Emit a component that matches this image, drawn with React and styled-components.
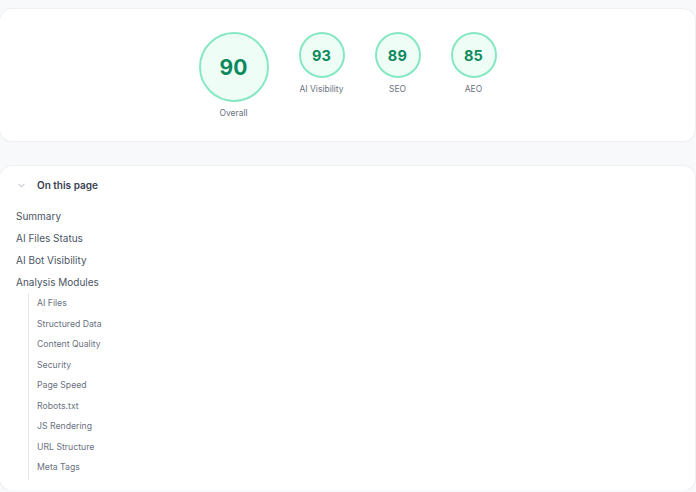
import React from 'react'
import styled, { createGlobalStyle } from 'styled-components'

const GlobalStyle = createGlobalStyle`
  html, body {
    margin: 0;
    padding: 0;
    background: #f8f9fb;
  }
  body {
    font-family: Inter, "Noto Sans", "Liberation Sans", sans-serif;
    color: #374151;
  }
  * { box-sizing: border-box; }
`

const scores = [
  { value: 90, label: 'Overall', big: true },
  { value: 93, label: 'AI Visibility' },
  { value: 89, label: 'SEO' },
  { value: 85, label: 'AEO' },
]

const topLinks = ['Summary', 'AI Files Status', 'AI Bot Visibility', 'Analysis Modules']

const modules = [
  'AI Files',
  'Structured Data',
  'Content Quality',
  'Security',
  'Page Speed',
  'Robots.txt',
  'JS Rendering',
  'URL Structure',
  'Meta Tags',
]

function App() {
  return (
    <Page>
      <GlobalStyle />
      <ScoreCard>
        <ScoreRow>
          {scores.map((s) => (
            <ScoreItem key={s.label}>
              <Circle $big={s.big}>{s.value}</Circle>
              <ScoreLabel>{s.label}</ScoreLabel>
            </ScoreItem>
          ))}
        </ScoreRow>
      </ScoreCard>

      <TocCard>
        <TocHeader>
          <svg width="11" height="11" viewBox="0 0 24 24" fill="none" stroke="#9ca3af" strokeWidth="1.8" strokeLinecap="round" strokeLinejoin="round">
            <path d="m6 9 6 6 6-6" />
          </svg>
          <span>On this page</span>
        </TocHeader>
        <TocList>
          {topLinks.map((l) => (
            <TocLink key={l}>{l}</TocLink>
          ))}
        </TocList>
        <SubList>
          {modules.map((m) => (
            <SubLink key={m}>{m}</SubLink>
          ))}
        </SubList>
      </TocCard>
    </Page>
  )
}

export default App

const Page = styled.div`
  padding: 9px 1px 0 0;
  display: flex;
  flex-direction: column;
  gap: 25px;
`

const Card = styled.div`
  background: #fff;
  border-radius: 12px;
  box-shadow: 0 0 0 1px #eef0f3, 0 1px 2px rgba(16, 24, 40, 0.04);
`

const ScoreCard = styled(Card)`
  height: 132px;
  padding-top: 23px;
`

const ScoreRow = styled.div`
  display: flex;
  justify-content: center;
  align-items: flex-start;
  gap: 30px;
`

const ScoreItem = styled.div`
  display: flex;
  flex-direction: column;
  align-items: center;
  gap: 5px;
`

const Circle = styled.div`
  width: ${(p) => (p.$big ? '70px' : '46px')};
  height: ${(p) => (p.$big ? '70px' : '46px')};
  border-radius: 50%;
  border: 2px solid #86e8c2;
  background: #eefdf6;
  display: flex;
  align-items: center;
  justify-content: center;
  color: #0c8a5c;
  font-weight: 700;
  font-size: ${(p) => (p.$big ? '21px' : '14.5px')};
  letter-spacing: 0.2px;
`

const ScoreLabel = styled.div`
  font-size: 8.5px;
  color: #6b7280;
  white-space: nowrap;
  line-height: 13px;
`

const TocCard = styled(Card)`
  height: 324px;
  padding: 12px 16px;
`

const TocHeader = styled.div`
  display: flex;
  align-items: center;
  gap: 10px;
  height: 14px;
  font-size: 10px;
  font-weight: 600;
  color: #374151;
`

const TocList = styled.div`
  display: flex;
  flex-direction: column;
  margin-top: 13px;
`

const TocLink = styled.div`
  font-size: 10px;
  line-height: 22px;
  color: #4b5563;
`

const SubList = styled.div`
  margin: 0 0 0 12px;
  border-left: 1px solid #e5e7eb;
  padding: 0 0 2px 8px;
  display: flex;
  flex-direction: column;
`

const SubLink = styled.div`
  font-size: 8.7px;
  line-height: 20.5px;
  color: #6b7280;
`
